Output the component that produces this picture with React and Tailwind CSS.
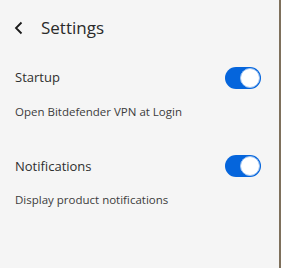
import React from 'react';

const Toggle = () => (
  <div className="w-[36px] h-[22px] rounded-full bg-[#0565dc] flex items-center justify-end pr-[1px]">
    <div className="w-[20px] h-[20px] rounded-full bg-white border border-[#9cc2f2]" />
  </div>
);

const Row = ({ title, desc }) => (
  <div className="pl-[15px] pr-[18px]">
    <div className="flex items-center justify-between h-[22px]">
      <span className="text-[13px] text-[#2f2f2f]">{title}</span>
      <Toggle />
    </div>
    <p className="mt-[14px] text-[11.5px] text-[#3c3c3c]">{desc}</p>
  </div>
);

export default function App() {
  return (
    <div
      className="flex w-[281px] h-[268px] bg-[#f5f5f5]"
      style={{ fontFamily: '"Open Sans", "Noto Sans", sans-serif' }}
    >
      <div className="flex-1">
        <div className="flex items-center h-[56px] pl-[14px] gap-[17px]">
          <svg width="10" height="14" viewBox="0 0 10 14" fill="none">
            <path d="M7.5 1.5 L2 7 L7.5 12.5" stroke="#1a1a1a" strokeWidth="1.8" />
          </svg>
          <span className="text-[17px] text-[#2a2a2a]">Settings</span>
        </div>
        <div className="mt-[11px]">
          <Row title="Startup" desc="Open Bitdefender VPN at Login" />
        </div>
        <div className="mt-[35px]">
          <Row title="Notifications" desc="Display product notifications" />
        </div>
      </div>
      <div className="w-[2px] bg-[#7e705c]" />
    </div>
  );
}
